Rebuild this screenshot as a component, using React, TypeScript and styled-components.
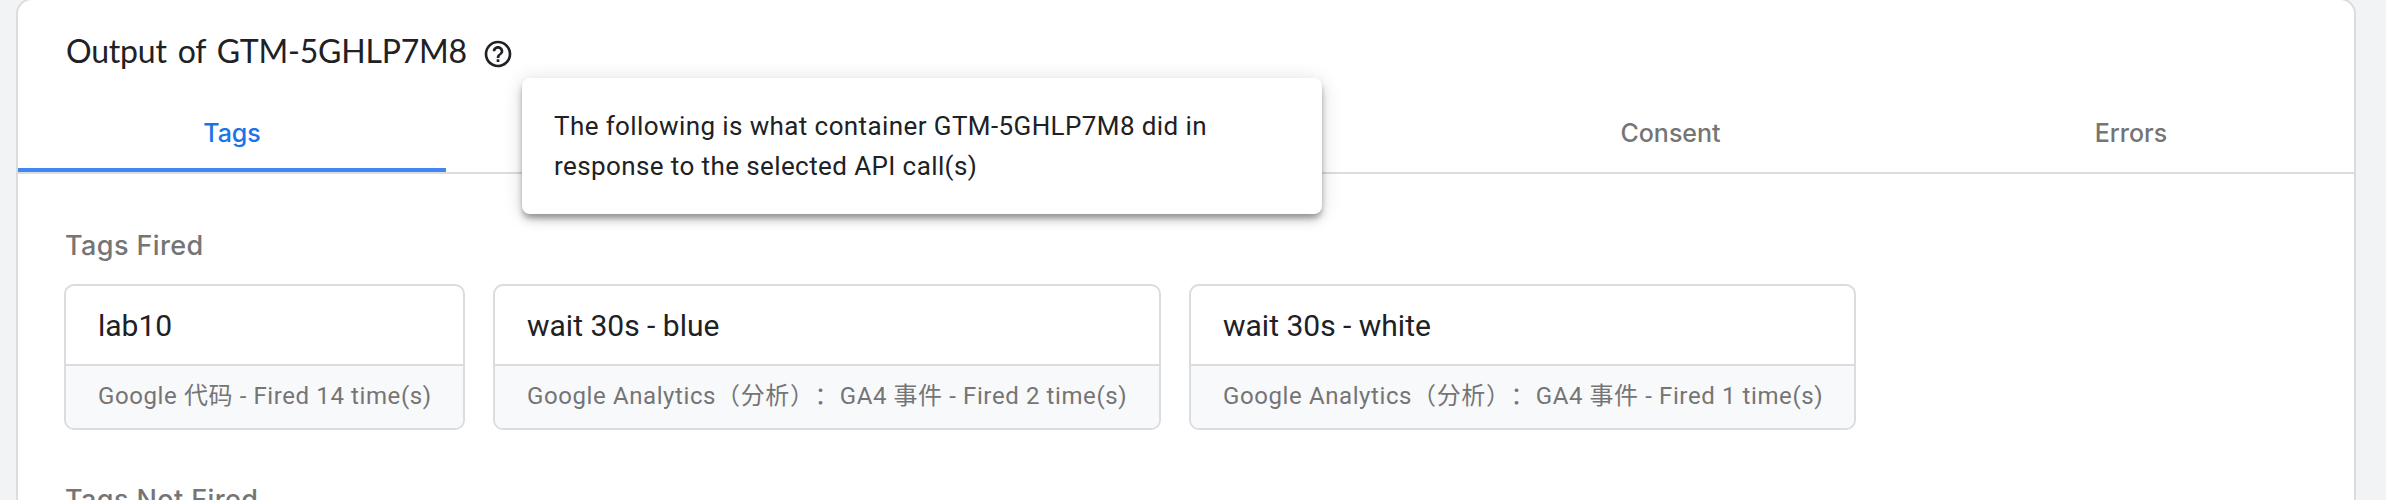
import React from 'react';
import styled, { createGlobalStyle } from 'styled-components';

const display = 'Lato, sans-serif';
const label = 'Inter, sans-serif';
const body = 'Roboto, "Noto Sans CJK SC", sans-serif';
const line = '#dadce0';

const GlobalStyle = createGlobalStyle`
  * { box-sizing: border-box; }
  body {
    margin: 0;
    height: 500px;
    overflow: hidden;
    background: #f1f3f4;
    color: #202124;
    font-family: ${body};
  }
`;

const Page = styled.main`
  height: 500px;
  padding: 0 30px 0 16px;
  overflow: hidden;
`;

const Panel = styled.section`
  height: 600px;
  margin-top: -2px;
  border: 2px solid ${line};
  border-radius: 16px;
  background: #fff;
`;

const Header = styled.header`
  display: flex;
  align-items: center;
  gap: 16px;
  height: 84px;
  padding: 18px 0 0 48px;
`;

const Title = styled.h1`
  width: 400px;
  margin: 0;
  font: 400 32px/40px ${display};
  letter-spacing: -0.2px;
  word-spacing: 3px;
  white-space: nowrap;
`;

const HelpAnchor = styled.span`
  position: relative;
  display: flex;
  margin-top: 6px;
`;

const HelpIcon = styled.svg`
  width: 32px;
  height: 32px;
  fill: currentColor;
`;

const Tooltip = styled.div`
  position: absolute;
  top: 40px;
  left: 40px;
  z-index: 2;
  width: 800px;
  height: 136px;
  padding: 28px 90px 28px 32px;
  border-radius: 8px;
  background: #fff;
  box-shadow:
    0 6px 10px -2px rgba(0, 0, 0, 0.3),
    0 4px 4px rgba(0, 0, 0, 0.14),
    0 2px 20px rgba(0, 0, 0, 0.14);
  font: 400 26px/40px ${body};
  letter-spacing: 0.4px;
`;

const TabBar = styled.nav`
  display: flex;
  justify-content: space-between;
  height: 90px;
  border-bottom: 2px solid ${line};
`;

const TabGroup = styled.div`
  display: flex;
`;

const Tab = styled.a<{ $width: number; $active?: boolean }>`
  display: flex;
  align-items: center;
  justify-content: center;
  width: ${(p) => p.$width}px;
  padding-top: 14px;
  border-bottom: 4px solid ${(p) => (p.$active ? '#4285f4' : 'transparent')};
  color: ${(p) => (p.$active ? '#1a73e8' : '#757575')};
  font: 500 25px/32px ${label};
`;

const Content = styled.div`
  padding: 52px 46px 0;
`;

const SectionTitle = styled.h2`
  margin: 0 0 18px;
  padding-left: 1px;
  color: #757575;
  font: 500 27px/40px ${label};
  letter-spacing: 0.4px;
`;

const Cards = styled.div`
  display: flex;
  gap: 28px;
  margin-bottom: 50px;
`;

const Card = styled.article<{ $width: number }>`
  width: ${(p) => p.$width}px;
  height: 146px;
  border: 2px solid ${line};
  border-radius: 10px;
  overflow: hidden;
  white-space: nowrap;
`;

const CardName = styled.div`
  height: 80px;
  padding-left: 32px;
  border-bottom: 2px solid ${line};
  font-size: 30px;
  line-height: 79px;
`;

const CardMeta = styled.div`
  height: 62px;
  padding-left: 32px;
  background: #f8f9fb;
  color: #757575;
  font-size: 24px;
  line-height: 60px;
  letter-spacing: 0.6px;
  text-spacing-trim: space-all;
  font-feature-settings: 'chws' 0;
`;

const Colon = styled.span`
  letter-spacing: -5.4px;
`;

const analytics = (
  <>
    Google Analytics（分析）<Colon>：</Colon> GA4 事件
  </>
);

const fired = [
  { name: 'lab10', type: 'Google 代码', count: 14, width: 401 },
  { name: 'wait 30s - blue', type: analytics, count: 2, width: 668 },
  { name: 'wait 30s - white', type: analytics, count: 1, width: 667 },
];

export default function App() {
  return (
    <Page>
      <GlobalStyle />
      <Panel>
        <Header>
          <Title>Output of GTM-5GHLP7M8</Title>
          <HelpAnchor>
            <HelpIcon viewBox="0 0 24 24" aria-hidden="true">
              <path d="M11 18h2v-2h-2v2zm1-16C6.48 2 2 6.48 2 12s4.48 10 10 10 10-4.48 10-10S17.52 2 12 2zm0 18c-4.41 0-8-3.59-8-8s3.59-8 8-8 8 3.59 8 8-3.59 8-8 8zm0-14c-2.21 0-4 1.79-4 4h2c0-1.1.9-2 2-2s2 .9 2 2c0 2-3 1.75-3 5h2c0-2.25 3-2.5 3-5 0-2.21-1.79-4-4-4z" />
            </HelpIcon>
            <Tooltip role="tooltip">
              The following is what container GTM-5GHLP7M8 did in response to the selected API call(s)
            </Tooltip>
          </HelpAnchor>
        </Header>
        <TabBar>
          <Tab $width={428} $active>Tags</Tab>
          <TabGroup>
            <Tab $width={475}>Consent</Tab>
            <Tab $width={446}>Errors</Tab>
          </TabGroup>
        </TabBar>
        <Content>
          <SectionTitle>Tags Fired</SectionTitle>
          <Cards>
            {fired.map((tag) => (
              <Card key={tag.name} $width={tag.width}>
                <CardName>{tag.name}</CardName>
                <CardMeta>
                  {tag.type} - Fired {tag.count} time(s)
                </CardMeta>
              </Card>
            ))}
          </Cards>
          <SectionTitle>Tags Not Fired</SectionTitle>
        </Content>
      </Panel>
    </Page>
  );
}
